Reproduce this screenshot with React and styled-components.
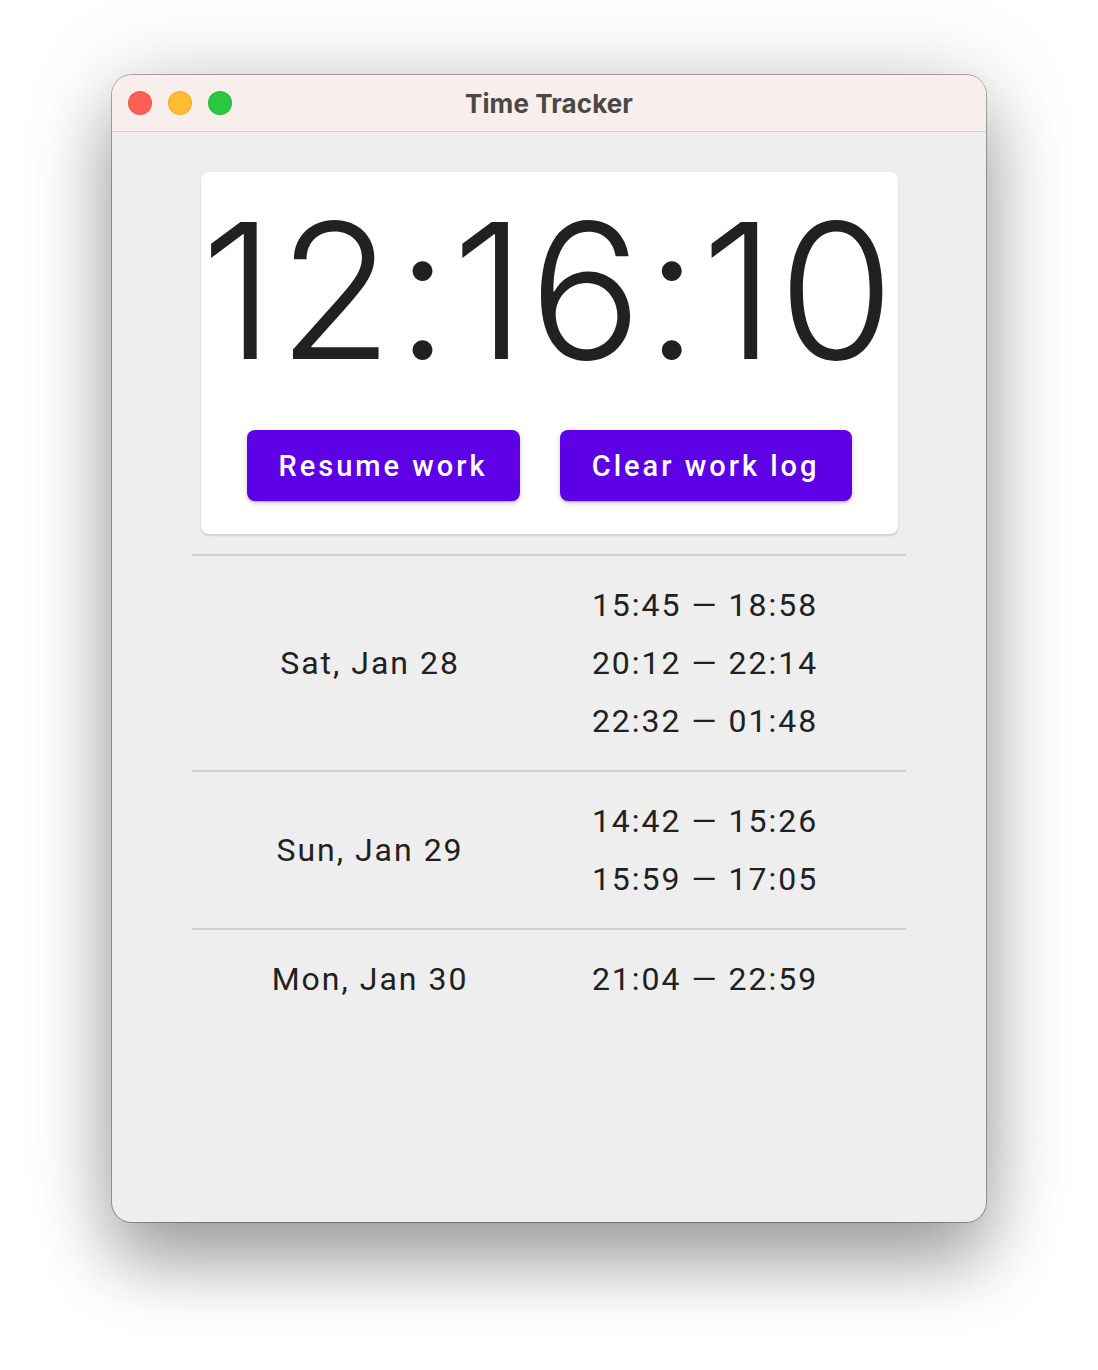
import React from "react";
import styled, { createGlobalStyle } from "styled-components";

const GlobalStyle = createGlobalStyle`
  html, body {
    margin: 0;
    padding: 0;
    background: #ffffff;
  }
  body {
    font-family: Roboto, "Liberation Sans", sans-serif;
  }
`

const log = [
  { day: "Sat, Jan 28", spans: ["15:45 — 18:58", "20:12 — 22:14", "22:32 — 01:48"] },
  { day: "Sun, Jan 29", spans: ["14:42 — 15:26", "15:59 — 17:05"] },
  { day: "Mon, Jan 30", spans: ["21:04 — 22:59"] },
]

const lights = ["#ff5f57", "#febc2e", "#28c840"]

const App = () => {
  return (
    <Desktop>
      <GlobalStyle />
      <Window>
        <TitleBar>
          <Lights>
            {lights.map((c) => <Light key={c} color={c} />)}
          </Lights>
          <Title>Time Tracker</Title>
        </TitleBar>
        <Content>
          <Card>
            <Clock>12:16:10</Clock>
            <Actions>
              <Button>Resume work</Button>
              <Button>Clear work log</Button>
            </Actions>
          </Card>
          <LogList>
            {log.map((entry) => (
              <LogRow key={entry.day}>
                <Day>{entry.day}</Day>
                <Spans>
                  {entry.spans.map((s) => <Span key={s}>{s}</Span>)}
                </Spans>
              </LogRow>
            ))}
          </LogList>
        </Content>
      </Window>
    </Desktop>
  )
}
export default App;

const Desktop = styled.div`
  min-height: 1370px;
  box-sizing: border-box;
  padding-top: 75px;
  background: #ffffff;
`
const Window = styled.div`
  width: 874px;
  height: 1147px;
  margin: 0 auto;
  border-radius: 20px;
  overflow: hidden;
  background: #eeeeee;
  box-shadow:
    0 0 0 1px rgba(0, 0, 0, 0.3),
    0 0 95px rgba(0, 0, 0, 0.16),
    0 42px 70px rgba(0, 0, 0, 0.32);
  display: flex;
  flex-direction: column;
`
const TitleBar = styled.div`
  height: 56px;
  flex: none;
  position: relative;
  display: flex;
  align-items: center;
  justify-content: center;
  background: #f8efed;
  border-bottom: 1px solid #d3d0cf;
`
const Lights = styled.div`
  position: absolute;
  left: 16px;
  top: 16px;
  display: flex;
  gap: 16px;
`
const Light = styled.span`
  width: 24px;
  height: 24px;
  border-radius: 50%;
  box-sizing: border-box;
  background: ${(p) => p.color};
  border: 1px solid rgba(0, 0, 0, 0.08);
`
const Title = styled.div`
  font-family: Inter, "Open Sans", sans-serif;
  font-weight: 700;
  font-size: 26px;
  color: #4b4847;
  letter-spacing: 0.1px;
`
const Content = styled.div`
  flex: 1;
  display: flex;
  flex-direction: column;
  align-items: center;
  padding-top: 40px;
`
const Card = styled.div`
  width: 697px;
  box-sizing: border-box;
  background: #ffffff;
  border-radius: 8px;
  box-shadow: 0 2px 2px rgba(0, 0, 0, 0.12), 0 0 1px rgba(0, 0, 0, 0.1);
  padding: 23px 0 33px;
  display: flex;
  flex-direction: column;
  align-items: center;
`
const Clock = styled.div`
  font-family: Inter, Roboto, sans-serif;
  font-weight: 300;
  font-size: 188px;
  line-height: 192px;
  letter-spacing: 3px;
  color: #212121;
  white-space: nowrap;
`
const Actions = styled.div`
  display: flex;
  gap: 40px;
  margin-top: 43px;
`
const Button = styled.button`
  height: 71px;
  padding: 0 32px;
  border: none;
  border-radius: 8px;
  background: #5d00e6;
  color: #ffffff;
  font-family: Roboto, "Liberation Sans", sans-serif;
  font-weight: 500;
  font-size: 29px;
  letter-spacing: 3px;
  box-shadow: 0 3px 2px -2px rgba(0, 0, 0, 0.2), 0 2px 4px rgba(0, 0, 0, 0.14), 0 1px 8px rgba(0, 0, 0, 0.08);
  cursor: pointer;
`
const LogList = styled.div`
  width: 714px;
  margin-top: 20px;
`
const LogRow = styled.div`
  display: grid;
  grid-template-columns: 356px 314px;
  align-items: center;
  padding: 20px 0;
  border-top: 2px solid #d0d0d0;
`
const Day = styled.div`
  text-align: center;
  font-size: 32px;
  letter-spacing: 2px;
  color: #212121;
`
const Spans = styled.div`
  display: flex;
  flex-direction: column;
  align-items: center;
`
const Span = styled.div`
  height: 58px;
  line-height: 58px;
  font-size: 32px;
  letter-spacing: 2px;
  color: #212121;
`
